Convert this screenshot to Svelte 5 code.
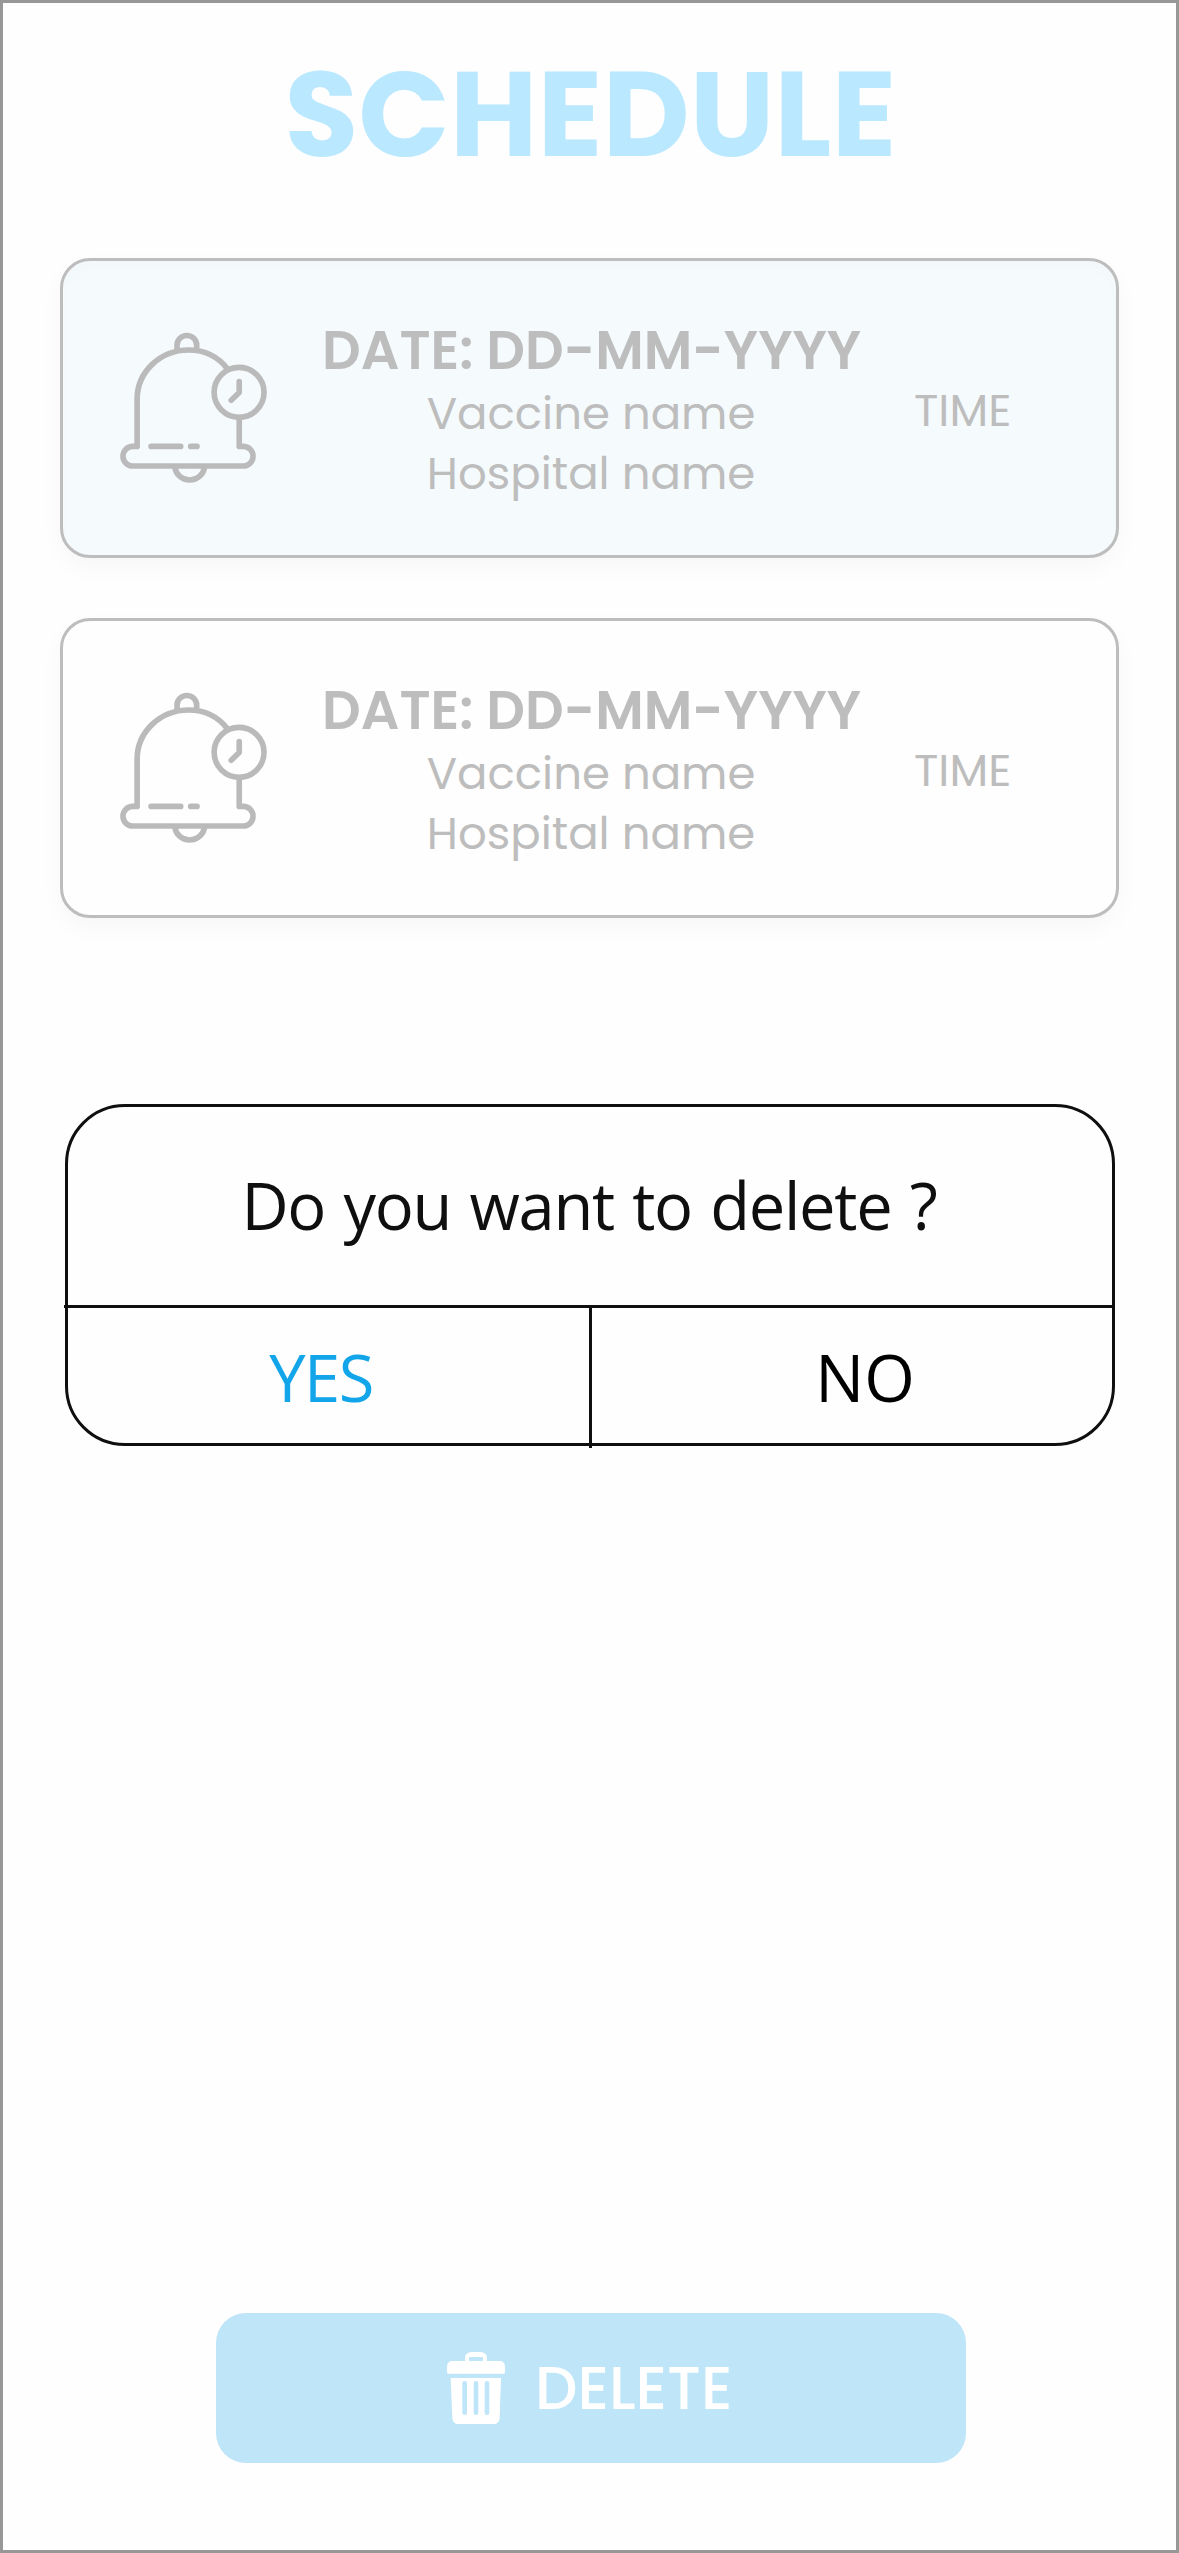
<script>
  const appointments = [
    { date: 'DD-MM-YYYY', vaccine: 'Vaccine name', hospital: 'Hospital name', time: 'TIME', active: true },
    { date: 'DD-MM-YYYY', vaccine: 'Vaccine name', hospital: 'Hospital name', time: 'TIME', active: false },
  ];
</script>

<main class="screen">
  <h1>SCHEDULE</h1>

  <section class="cards">
    {#each appointments as item}
      <article class="card" class:active={item.active}>
        <svg class="bell" viewBox="57 66 447 457" fill="none" stroke="#bababa" stroke-width="17" stroke-linecap="round" stroke-linejoin="round">
          <path d="M231 117V105a29 28 0 0 1 59 0V117" stroke-linecap="butt" />
          <path d="M383 177C355 141 314 120 266 120C180 120 111 186 111 268V410H98a29 29 0 0 0 0 59H430a29 29 0 0 0 0-59H418V325" />
          <circle cx="417.500" cy="247.500" r="75" />
          <path d="M418 215V248L394 271M153 410H242M272 410H291" />
          <path d="M224 471C228 496 246 511 269 511S310 496 314 471" stroke-linecap="butt" />
        </svg>
        <div class="details">
          <h2>DATE: {item.date}</h2>
          <p class="vaccine">{item.vaccine}</p>
          <p class="hospital">{item.hospital}</p>
        </div>
        <span class="time">{item.time}</span>
      </article>
    {/each}
  </section>

  <section class="dialog">
    <p class="question">Do you want to delete ?</p>
    <div class="actions">
      <button class="yes">YES</button>
      <span class="divider"></span>
      <button class="no">NO</button>
    </div>
  </section>

  <button class="delete">
    <svg class="trash" viewBox="81 66 174 216" fill="#fff">
      <path fill-rule="evenodd" d="M81 127V110Q81 93 98 93H135V86Q135 66 155 66H181Q201 66 201 86V93H238Q255 93 255 110V127Q255 131 251 131H85Q81 131 81 127ZM147 93H189V85Q189 81 185 81H151Q147 81 147 85Z" />
      <path fill-rule="evenodd" d="M92 144H243L239 264Q238 282 220 282H116Q98 282 97 264ZM127 160V248a7 7 0 0 0 14 0V160a7 7 0 0 0-14 0ZM161 160V248a7 7 0 0 0 14 0V160a7 7 0 0 0-14 0ZM194 160V248a7 7 0 0 0 14 0V160a7 7 0 0 0-14 0Z" />
    </svg>
    <span>DELETE</span>
  </button>
</main>

<style>
  :global(body) {
    background: #fff;
  }

  .screen {
    box-sizing: border-box;
    display: flex;
    flex-direction: column;
    width: 1179px;
    height: 2553px;
    border: 3px solid #979797;
    background: #fefefe;
    font-family: Poppins, Inter, sans-serif;
  }

  h1,
  h2,
  p {
    margin: 0;
    white-space: nowrap;
  }

  button {
    padding: 0;
    border: 0;
    background: none;
    font: inherit;
  }

  h1 {
    padding: 0 0 33px 2px;
    color: #b9e8ff;
    font-size: 120px;
    font-weight: 700;
    line-height: 222px;
    text-align: center;
  }

  .cards {
    display: flex;
    flex-direction: column;
    gap: 60px;
    padding: 0 57px;
  }

  .card {
    box-sizing: border-box;
    display: grid;
    grid-template-columns: 149px 538px 94px;
    column-gap: 54px;
    align-items: start;
    height: 300px;
    padding: 56px 0 0 56px;
    border: 3px solid #bdbdbd;
    border-radius: 30px;
    background: #fefefe;
    box-shadow: 0 10px 24px rgba(0, 0, 0, 0.03);
    color: #bdbdbd;
  }

  .card.active {
    background: #f5fafd;
    box-shadow: 0 10px 24px rgba(0, 0, 0, 0.03), inset 0 8px 14px rgba(0, 0, 30, 0.01);
  }

  .bell {
    width: 149px;
    height: 152px;
    margin-top: 15px;
  }

  .details {
    text-align: center;
  }

  h2 {
    padding-bottom: 1px;
    font-size: 54px;
    font-weight: 600;
    line-height: 66px;
  }

  .details p,
  .time {
    font-size: 45px;
    font-weight: 400;
    line-height: 60px;
  }

  .time {
    margin-top: 64px;
    white-space: nowrap;
  }

  .dialog {
    box-sizing: border-box;
    width: 1050px;
    height: 342px;
    margin: 186px 0 0 62px;
    border: 3px solid #0f0f0f;
    border-radius: 60px;
    color: #0f0f0f;
    font-family: 'Segoe UI', 'Open Sans', sans-serif;
    font-size: 65px;
  }

  .question {
    height: 198px;
    padding-right: 2px;
    letter-spacing: -1.3px;
    word-spacing: 2.8px;
    line-height: 196px;
    text-align: center;
  }

  .actions {
    display: grid;
    grid-template-columns: 525px 3px 1fr;
    height: 140px;
    margin-left: -4px;
    border-top: 3px solid #0f0f0f;
  }

  .actions button {
    padding-bottom: 3px;
    line-height: 134px;
  }

  .divider {
    background: #0f0f0f;
  }

  .actions .yes {
    padding-right: 11px;
    color: #12a5ea;
    letter-spacing: -1.5px;
  }

  .actions .no {
    padding-left: 26px;
    color: #000;
  }

  .delete {
    display: flex;
    align-items: center;
    gap: 30px;
    width: 750px;
    height: 150px;
    margin: auto 0 87px 213px;
    padding-left: 231px;
    box-sizing: border-box;
    border-radius: 30px;
    background: #bee5f8;
    color: #fff;
    font-size: 60px;
    font-weight: 500;
    line-height: 150px;
  }

  .trash {
    width: 58px;
    height: 72px;
  }
</style>
